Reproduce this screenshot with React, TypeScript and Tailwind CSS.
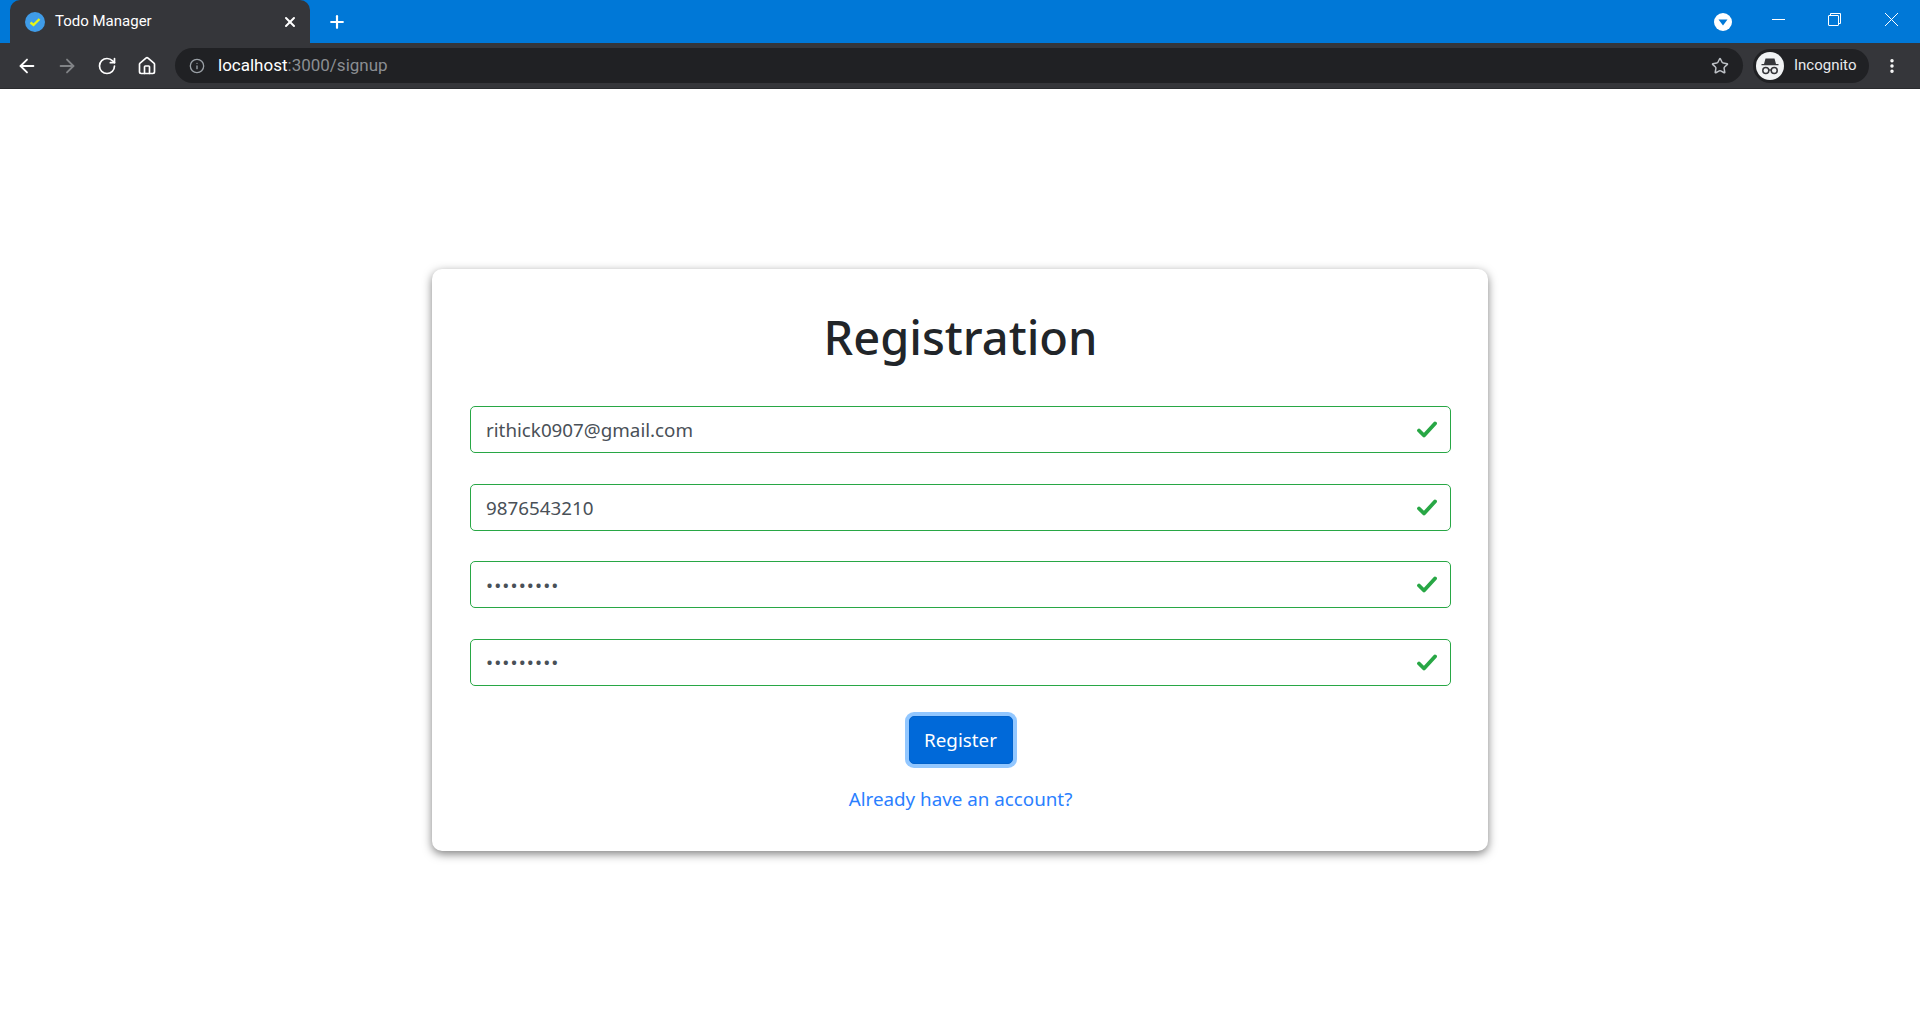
import { Plus, X, ArrowLeft, ArrowRight, RotateCw, Home, Info, Star, EllipsisVertical } from 'lucide-react';

const fields = [
  { type: 'text', value: 'rithick0907@gmail.com' },
  { type: 'text', value: '9876543210' },
  { type: 'password', value: 'secret123' },
  { type: 'password', value: 'secret123' },
];

function Check() {
  return (
    <svg width="20" height="17" viewBox="0 0 20 17" fill="none" className="absolute right-[14px] top-[15px]">
      <path d="M2 9.5L7 14.5L18 2.5" stroke="#28a745" strokeWidth="3.8" strokeLinecap="round" strokeLinejoin="round" />
    </svg>
  );
}

function IncognitoIcon() {
  return (
    <svg width="28" height="28" viewBox="0 0 28 28">
      <circle cx="14" cy="14" r="14" fill="#f1f3f4" />
      <path d="M9.5 6.5h9l1.5 5.5h2.5v1.3h-17V12H8z" fill="#35363a" />
      <circle cx="9.8" cy="18.5" r="3" fill="none" stroke="#35363a" strokeWidth="1.5" />
      <circle cx="18.2" cy="18.5" r="3" fill="none" stroke="#35363a" strokeWidth="1.5" />
      <path d="M12.8 18h2.4" stroke="#35363a" strokeWidth="1.3" />
    </svg>
  );
}

function BrowserChrome() {
  return (
    <div className="font-['Roboto','Open_Sans',sans-serif]">
      <div className="h-[43px] bg-[#0078d7] flex items-end pl-[10px] text-white">
        <div className="w-[300px] h-[43px] bg-[#35363a] rounded-t-[10px] flex items-center pl-[15px] pr-[12px]">
          <svg width="20" height="20" viewBox="0 0 20 20">
            <circle cx="10" cy="10" r="10" fill="#3f9ce8" />
            <path d="M5.5 10.5L8.5 13L14.5 7" stroke="#e8f516" strokeWidth="2.4" fill="none" />
          </svg>
          <span className="ml-[10px] text-[15px] flex-1">Todo Manager</span>
          <X size={16} strokeWidth={3} />
        </div>
        <div className="h-[43px] flex items-center ml-[17px]">
          <Plus size={20} strokeWidth={2.6} />
        </div>
        <div className="flex-1 h-[43px] flex items-center justify-end">
          <svg width="18" height="18" viewBox="0 0 18 18" className="mr-[18px]">
            <circle cx="9" cy="9" r="9" fill="#fff" />
            <path d="M4.5 6.5h9L9 12.5z" fill="#0078d7" />
          </svg>
          <div className="w-[56px] flex justify-center mt-[-5px]">
            <svg width="13" height="13" viewBox="0 0 13 13" stroke="#fff" strokeWidth="1"><path d="M0 6.5h13" /></svg>
          </div>
          <div className="w-[56px] flex justify-center mt-[-5px]">
            <svg width="13" height="13" viewBox="0 0 13 13" fill="none" stroke="#fff" strokeWidth="1">
              <rect x="0.5" y="2.5" width="10" height="10" rx="0.5" />
              <path d="M2.5 2.5V0.5h10v10h-2" />
            </svg>
          </div>
          <div className="w-[58px] flex justify-center mt-[-5px]">
            <svg width="13" height="13" viewBox="0 0 13 13" stroke="#fff" strokeWidth="1"><path d="M0 0L13 13M13 0L0 13" /></svg>
          </div>
        </div>
      </div>
      <div className="h-[46px] bg-[#35363a] border-b border-[#2a2b2e] flex items-center pl-[7px] text-white">
        <div className="w-[40px] flex justify-center"><ArrowLeft size={22} strokeWidth={2} /></div>
        <div className="w-[40px] flex justify-center text-[#818386]"><ArrowRight size={22} strokeWidth={2} /></div>
        <div className="w-[40px] flex justify-center"><RotateCw size={20} strokeWidth={2} /></div>
        <div className="w-[40px] flex justify-center"><Home size={20} strokeWidth={2} /></div>
        <div className="ml-[8px] h-[35px] w-[1568px] bg-[#202124] rounded-full flex items-center pl-[14px] pr-[14px]">
          <Info size={16} strokeWidth={2} className="text-[#9aa0a6]" />
          <span className="ml-[13px] text-[17px]">localhost<span className="text-[#8b8e92]">:3000/signup</span></span>
          <Star size={18} strokeWidth={2} className="ml-auto text-[#bdc1c6]" />
        </div>
        <div className="ml-[10px] h-[34px] w-[116px] bg-[#202124] rounded-full flex items-center pl-[3px]">
          <IncognitoIcon />
          <span className="ml-[10px] text-[15px] text-[#e8eaed]">Incognito</span>
        </div>
        <div className="ml-[14px]"><EllipsisVertical size={18} strokeWidth={2.6} /></div>
      </div>
    </div>
  );
}

export default function App() {
  return (
    <div className="min-h-[1029px] bg-white">
      <BrowserChrome />
      <div className="pt-[180px] flex justify-center font-['Noto_Sans',sans-serif]">
        <div className="w-[1056px] h-[582px] bg-white rounded-[10px] shadow-[0_3px_10px_rgba(0,0,0,0.5)] pl-[38px] pr-[37px] pt-[38px]">
          <h1 className="text-center text-[47px] leading-[60px] font-medium text-[#212529]">Registration</h1>
          <div className="mt-[39px] flex flex-col gap-[30.67px]">
            {fields.map((f, i) => (
              <div key={i} className="relative">
                <input
                  readOnly
                  type={f.type}
                  defaultValue={f.value}
                  className={
                    f.type === 'password'
                      ? 'block w-full h-[47px] border border-[#28a745] rounded-[5px] pl-[15px] pr-[48px] text-[18.8px] tracking-[1.1px] text-[#495057] outline-none'
                      : 'block w-full h-[47px] border border-[#28a745] rounded-[5px] pl-[15px] pr-[48px] pt-[1px] text-[18.8px] text-[#495057] outline-none'
                  }
                />
                <Check />
              </div>
            ))}
          </div>
          <div className="mt-[30px] flex flex-col items-center">
            <button className="w-[104px] h-[48px] bg-[#0069d9] text-white text-[18.8px] rounded-[5px] border border-[#0062cc] shadow-[0_0_0_4px_rgba(38,143,255,0.5)]">Register</button>
            <a href="#" className="mt-[20px] text-[18.8px] leading-[30px] text-[#2a7fff]">Already have an account?</a>
          </div>
        </div>
      </div>
    </div>
  );
}
